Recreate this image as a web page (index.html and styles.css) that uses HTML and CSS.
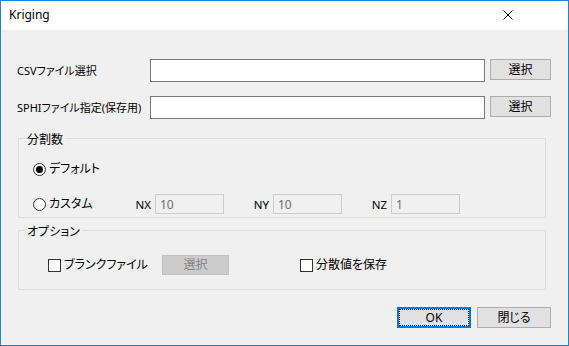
FILE: index.html
```html
<!DOCTYPE html>
<html lang="ja">
<head>
<meta charset="utf-8">
<title>Kriging</title>
<link rel="stylesheet" href="styles.css">
</head>
<body>
<div class="window">
  <div class="titlebar">
    <span class="title">Kriging</span>
    <span class="close">
      <svg width="10" height="10" viewBox="0 0 10 10"><path d="M0.5 0.5 L9.5 9.5 M9.5 0.5 L0.5 9.5" stroke="#000" stroke-width="1" fill="none"/></svg>
    </span>
  </div>
  <div class="content">
    <div class="file-row">
      <span class="label">CSVファイル選択</span>
      <span class="textbox"></span>
      <span class="btn">選択</span>
    </div>
    <div class="file-row row2">
      <span class="label">SPHIファイル指定(保存用)</span>
      <span class="textbox"></span>
      <span class="btn">選択</span>
    </div>

    <div class="group g1">
      <div class="group-title">分割数</div>
      <div class="grow first">
        <span class="radio checked"><span class="dot"></span></span>
        <span class="opt-text">デフォルト</span>
      </div>
      <div class="grow second">
        <div class="radio-item">
          <span class="radio"></span>
          <span class="opt-text">カスタム</span>
        </div>
        <div class="dim"><span class="dim-label">NX</span><span class="dbox">10</span></div>
        <div class="dim"><span class="dim-label">NY</span><span class="dbox">10</span></div>
        <div class="dim"><span class="dim-label">NZ</span><span class="dbox">1</span></div>
      </div>
    </div>

    <div class="group g2">
      <div class="group-title">オプション</div>
      <div class="grow opt-row">
        <div class="check-item ci1">
          <span class="check"></span>
          <span class="opt-text">ブランクファイル</span>
        </div>
        <span class="btn disabled">選択</span>
        <div class="check-item ci2">
          <span class="check"></span>
          <span class="opt-text">分散値を保存</span>
        </div>
      </div>
    </div>

    <div class="footer">
      <span class="btn dlg default">OK</span>
      <span class="btn dlg">閉じる</span>
    </div>
  </div>
</div>
</body>
</html>
```

FILE: styles.css
```css
* { box-sizing: border-box; }
html, body { margin: 0; padding: 0; background: #f0f0f0; }
body {
  font-family: "Noto Sans", "Noto Sans CJK JP", sans-serif;
  font-size: 12px;
  color: #000;
  font-feature-settings: "palt";
}
.window {
  width: 569px;
  height: 346px;
  border: 1px solid #1883d7;
  display: flex;
  flex-direction: column;
  background: #f0f0f0;
}
.titlebar {
  height: 29px;
  background: #fff;
  display: flex;
  align-items: center;
  justify-content: space-between;
  padding: 0 55px 0 8px;
  flex: none;
}
.title { font-size: 12px; line-height: 14px; padding-bottom: 2px; }
.close { display: flex; width: 10px; height: 10px; margin-top: -1px; }
.content {
  flex: 1;
  padding: 29px 17px 0 16px;
  display: flex;
  flex-direction: column;
}
.file-row {
  display: flex;
  align-items: flex-start;
  height: 23px;
}
.row2 { margin-top: 14px; }
.file-row .label {
  width: 133px;
  line-height: 23px;
  white-space: nowrap;
  font-size: 11px;
}
.textbox {
  width: 335px;
  height: 23px;
  border: 1px solid #7a7a7a;
  background: #fff;
}
.btn {
  display: flex;
  align-items: center;
  justify-content: center;
  height: 21px;
  background: #e1e1e1;
  border: 1px solid #adadad;
  line-height: 14px;
}
.file-row .btn { width: 61px; margin-left: 5px; }
.group {
  border: 1px solid #dcdcdc;
  margin: 0 5px 0 1px;
  display: flex;
  flex-direction: column;
}
.g1 { margin-top: 19px; height: 80px; }
.g2 { margin-top: 12px; height: 60px; }
.group-title {
  align-self: flex-start;
  margin: -6px 0 0 6px;
  padding: 0 2px;
  line-height: 14px;
  background: #f0f0f0;
}
.grow {
  display: flex;
  align-items: center;
  height: 20px;
}
.g1 .first { margin-top: 12px; padding-left: 14px; }
.g1 .second { margin-top: 15px; padding-left: 14px; }
.radio {
  width: 13px;
  height: 13px;
  border: 1px solid #333;
  border-radius: 50%;
  background: #fff;
  display: flex;
  align-items: center;
  justify-content: center;
  flex: none;
}
.radio .dot {
  width: 7px;
  height: 7px;
  border-radius: 50%;
  background: #000;
}
.opt-text { margin-left: 3px; line-height: 14px; }
.radio-item { display: flex; align-items: center; width: 101px; }
.dim {
  width: 90px;
  display: flex;
  align-items: center;
  justify-content: flex-end;
  margin-right: 28px;
}
.dim-label { color: #000; margin-right: 4px; font-size: 11.5px; }
.dbox {
  width: 69px;
  height: 20px;
  border: 1px solid #cccccc;
  background: #f0f0f0;
  color: #6d6d6d;
  padding-left: 4px;
  display: flex;
  align-items: center;
}
.opt-row { margin-top: 16px; padding-left: 29px; }
.check {
  width: 13px;
  height: 13px;
  border: 1px solid #333;
  background: #fff;
  flex: none;
}
.check-item { display: flex; align-items: center; }
.ci1 { width: 114px; }
.btn.disabled {
  width: 67px;
  height: 20px;
  background: #cccccc;
  border-color: #bfbfbf;
  color: #838383;
}
.ci2 { margin-left: 71px; }
.footer {
  margin-top: 17px;
  display: flex;
  justify-content: flex-end;
  gap: 6px;
}
.btn.dlg { width: 74px; height: 21px; }
.btn.default {
  border: 2px solid #0078d7;
  outline: 1px dotted #000;
  outline-offset: -3px;
}
```
